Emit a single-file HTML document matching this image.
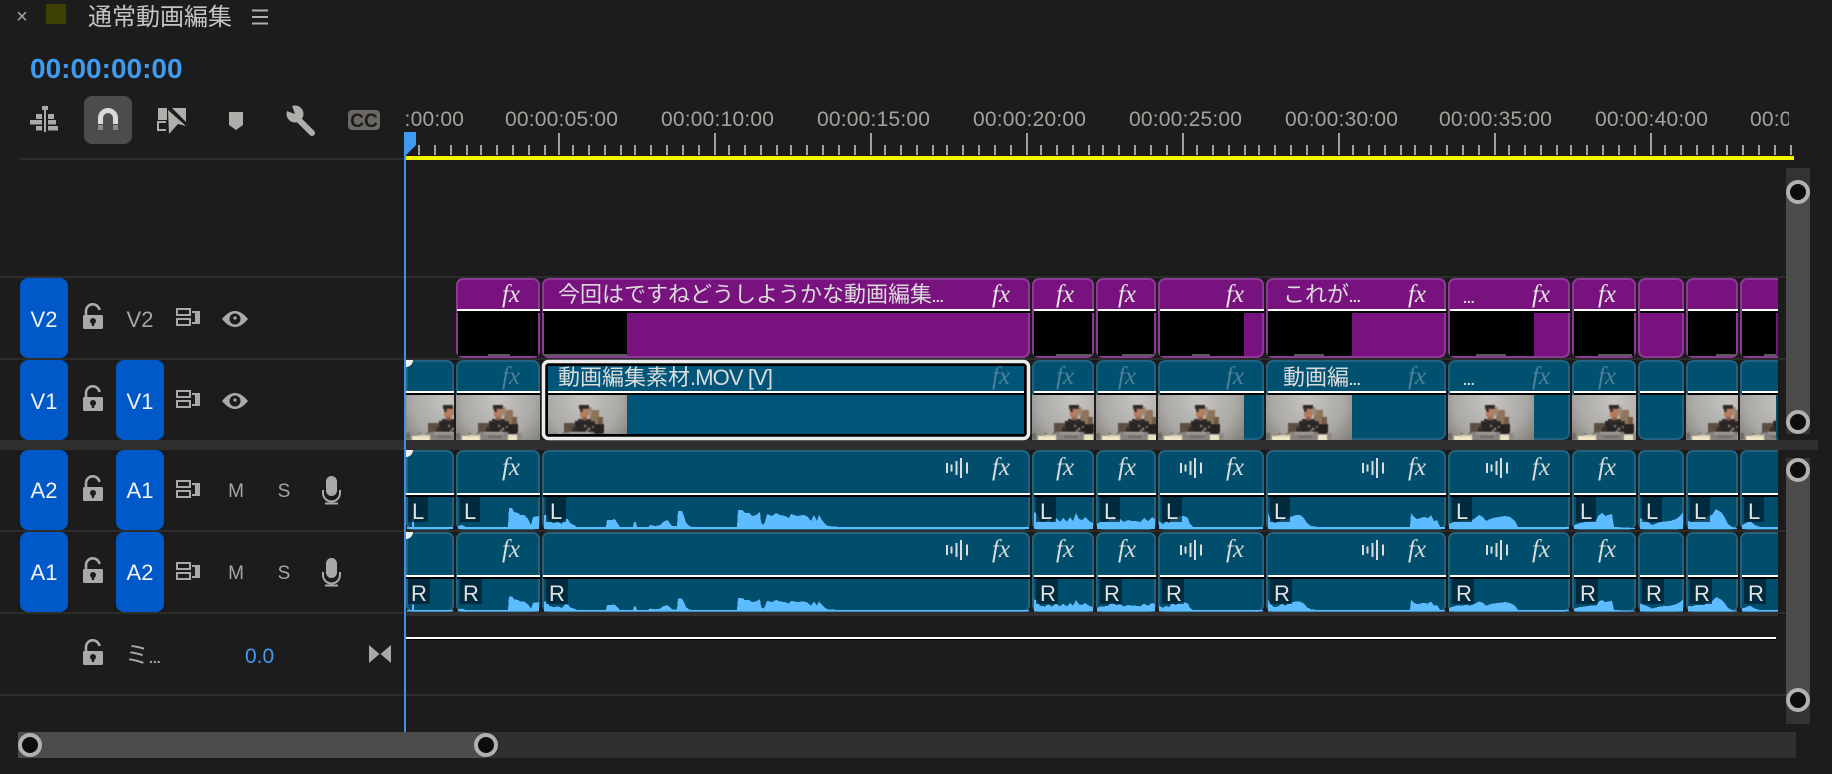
<!DOCTYPE html>
<html lang="ja"><head><meta charset="utf-8"><title>通常動画編集</title>
<style>
html,body{margin:0;padding:0;background:#1c1c1c;width:1832px;height:774px;overflow:hidden}
svg{display:block}
text{font-family:"Liberation Sans","Noto Sans CJK JP",sans-serif}
.fx text{font-family:"Liberation Serif",serif;font-style:italic;font-size:25px;text-anchor:end}
.rl text{font-size:21px;fill:#a5a19c;letter-spacing:.2px}
.btn{font-size:22px;fill:#f2f2f2;text-anchor:middle}
.clipt{font-size:22px;fill:#dcdcdc}
.dots{font-size:14px;font-weight:700}
.lat{letter-spacing:-.9px}
.lr{font-size:22px;fill:#e2e2e2}
.ms{font-size:19px;fill:#a6a6a6;text-anchor:middle}
</style></head><body>
<svg width="1832" height="774" viewBox="0 0 1832 774" xmlns="http://www.w3.org/2000/svg">
<defs>
<radialGradient id="bg" gradientUnits="userSpaceOnUse" cx="42" cy="6" r="60"><stop offset="0" stop-color="#c6c4c1"/><stop offset=".6" stop-color="#aba9a5"/><stop offset="1" stop-color="#7c7974"/></radialGradient>
<filter id="sf" x="-5%" y="-5%" width="110%" height="110%"><feGaussianBlur stdDeviation=".55"/></filter>
<symbol id="t" overflow="hidden">
<rect width="86" height="45" fill="url(#bg)"/>
<g filter="url(#sf)">
<rect x="48" y="15" width="9" height="14" fill="#8d7459"/><rect x="45" y="12" width="5" height="8" fill="#9a8b78"/><rect x="56" y="22" width="5" height="14" fill="#6f5c48"/>
<rect x="22" y="28" width="12" height="10" fill="#5b5042"/>
<rect x="33" y="26" width="20" height="13" fill="#2a2826"/><rect x="36" y="24" width="13" height="4" fill="#2f2c2a"/><rect x="50" y="29" width="12" height="10" fill="#262422"/><rect x="30" y="32" width="5" height="7" fill="#302d2b"/>
<rect x="37" y="10" width="10" height="4" fill="#2f2c2a"/><rect x="38" y="14" width="8" height="8" fill="#b57c5f"/><rect x="40" y="22" width="5" height="3" fill="#8f6048"/><rect x="38" y="13" width="3" height="4" fill="#3a302a"/>
<rect x="42" y="30" width="2" height="2" fill="#77736f"/><rect x="46" y="33" width="2" height="2" fill="#8a8682"/><rect x="50" y="31" width="2" height="2" fill="#6a6662"/><rect x="44" y="35" width="2" height="2" fill="#77736f"/>
<rect x="0" y="38" width="4" height="6" fill="#6e6a65"/><rect x="12" y="38" width="3" height="3" fill="#7b7671"/><rect x="20" y="38" width="3" height="3" fill="#7b7671"/>
<rect x="6" y="41" width="20" height="5" fill="#efe6c6"/><rect x="12" y="40" width="12" height="2" fill="#d9d0b2"/>
<rect x="24" y="37" width="28" height="9" fill="#86827d"/><rect x="28" y="37" width="20" height="2" fill="#a19d98"/><rect x="32" y="41" width="14" height="2" fill="#6f6b66"/>
<rect x="52" y="40" width="9" height="6" fill="#ebe2c3"/><rect x="61" y="38" width="5" height="8" fill="#8d8984"/>
</g>
</symbol>
<g id="cs">
<rect x="407" y="1" width="46" height="78" rx="6"/><rect x="457" y="1" width="82" height="78" rx="6"/><rect x="543" y="1" width="486" height="78" rx="6"/><rect x="1033" y="1" width="60" height="78" rx="6"/><rect x="1097" y="1" width="58" height="78" rx="6"/><rect x="1159" y="1" width="104" height="78" rx="6"/><rect x="1267" y="1" width="178" height="78" rx="6"/><rect x="1449" y="1" width="120" height="78" rx="6"/><rect x="1573" y="1" width="62" height="78" rx="6"/><rect x="1639" y="1" width="44" height="78" rx="6"/><rect x="1687" y="1" width="50" height="78" rx="6"/><rect x="1741" y="1" width="60" height="78" rx="6"/>
</g>
<g id="ln">
<rect x="406" width="48" height="2"/><rect x="457" width="83" height="2"/><rect x="543" width="487" height="2"/><rect x="1034" width="60" height="2"/><rect x="1098" width="58" height="2"/><rect x="1160" width="104" height="2"/><rect x="1268" width="178" height="2"/><rect x="1450" width="120" height="2"/><rect x="1574" width="62" height="2"/><rect x="1640" width="44" height="2"/><rect x="1688" width="50" height="2"/><rect x="1742" width="40" height="2"/>
</g>
<g id="tk"><path d="M14 145V155M30 145V155M46 145V155M62 145V155M76 145V155M92 145V155M108 145V155M124 145V155M140 145V155M156 133V155" stroke="#a39f9a" stroke-width="2" fill="none"/></g>
<g id="lock" fill="#a9a9a9"><rect x="83" y="315" width="20" height="14" rx="1.500"/><path d="M86 316v-4.500a6.800 6.800 0 0 1 13.500-1.500" fill="none" stroke="#a9a9a9" stroke-width="2.600"/><circle cx="93" cy="321" r="3" fill="#1c1c1c"/><rect x="91.800" y="321" width="2.400" height="5" fill="#1c1c1c"/></g>
<g id="sync" fill="none" stroke="#a9a9a9" stroke-width="2"><rect x="177" y="309" width="13" height="6"/><rect x="177" y="319" width="13" height="6"/><path d="M192 312h7v11h-7" stroke-width="2"/><rect x="195" y="312" width="4" height="11" fill="#a9a9a9" stroke="none"/></g>
<g id="eye"><path d="M222 319Q235 303 248 319Q235 335 222 319Z" fill="#a9a9a9"/><circle cx="235" cy="319" r="5.500" fill="#1c1c1c"/><circle cx="235" cy="318" r="1.600" fill="#a9a9a9"/></g>
<g id="mic"><rect x="326" y="476" width="11" height="20" rx="5.500" fill="#a9a9a9"/><path d="M323 490v3a8.500 8.500 0 0 0 17 0v-3M331.500 501v2M325 503.500h13" fill="none" stroke="#a9a9a9" stroke-width="2"/></g>
<g id="aw"><path d="M1-5v10M5.500-3.500v7M10.500-7v14M15-10v20M21-5.500v11" stroke="#dcdcdc" stroke-width="2" fill="none"/></g>
<g id="wave" fill="#5cbcff" shape-rendering="crispEdges">
<polygon points="407,529 407,527 412,527 412,519 414,519 414,527 453,527 453,529"/>
<polygon points="458,529 458,526 462,525 466,527 508,527 509,508 512,508 514,512 518,513 520,515 524,515 528,519 531,525 533,517 539,516 539,529"/>
<polygon points="544,529 544,515 547,515 549,521 553,523 558,522 562,524 565,519 568,519 570,523 574,525 577,527 606,527 607,520 612,520 614,519 616,521 618,524 620,527 633,527 634,522 636,522 637,527 648,527 650,525 655,526 660,525 663,522 667,520 669,522 672,526 677,526 678,511 682,511 684,516 686,523 689,526 692,527 737,527 738,510 742,510 745,513 749,513 752,516 756,515 760,512 761,522 763,525 765,522 767,514 772,516 776,513 780,515 785,516 789,518 791,514 797,516 803,515 807,516 811,521 814,515 817,521 819,515 822,520 825,524 828,526 840,527 1029,527 1029,529"/>
<polygon points="1034,529 1034,512 1037,514 1040,521 1045,522 1048,519 1052,522 1056,518 1060,522 1063,518 1067,522 1070,517 1073,521 1076,513 1079,519 1082,520 1085,517 1089,521 1093,523 1093,529"/>
<polygon points="1097,529 1097,524 1100,522 1104,522 1108,521 1110,518 1113,516 1116,520 1120,519 1124,522 1128,520 1132,521 1136,521 1140,522 1144,518 1148,521 1152,517 1155,519 1155,529"/>
<polygon points="1159,529 1159,521 1163,524 1166,521 1169,523 1172,517 1176,520 1179,516 1184,516 1188,518 1190,524 1193,527 1263,527 1263,529"/>
<polygon points="1268,529 1268,512 1270,518 1274,523 1278,522 1282,518 1285,521 1290,517 1296,515 1300,515 1304,518 1307,523 1311,526 1318,527 1410,527 1411,513 1414,517 1417,519 1424,517 1428,518 1431,515 1434,521 1437,520 1438,522 1440,527 1445,527 1445,529"/>
<polygon points="1449,529 1449,524 1456,521 1468,520 1470,521 1474,519 1479,515 1483,517 1486,521 1490,519 1493,518 1505,516 1510,517 1515,521 1518,527 1569,527 1569,529"/>
<polygon points="1574,529 1574,525 1580,523 1590,521 1596,521 1598,516 1602,513 1605,516 1612,514 1614,527 1635,528 1635,529"/>
<polygon points="1640,529 1640,518 1648,522 1652,525 1660,522 1670,521 1676,519 1680,516 1683,512 1683,529"/>
<polygon points="1688,529 1688,521 1692,522 1696,520 1704,520 1708,516 1712,515 1716,509 1719,511 1722,513 1725,518 1728,524 1732,527 1737,528 1737,529"/>
<polygon points="1742,529 1742,525 1746,523 1750,521 1755,525 1760,527 1778,527 1778,529"/>
</g>
</defs>

<rect width="1832" height="774" fill="#1c1c1c"/>

<!-- header -->
<text x="22" y="23" font-size="20" fill="#a8a8a8" text-anchor="middle">×</text>
<rect x="46" y="4" width="20" height="20" fill="#3c4000"/>
<text x="88" y="25" font-size="24" fill="#c4c4c4">通常動画編集</text>
<path d="M252 10.500H268M252 17H268M252 23.500H268" stroke="#b0b0b0" stroke-width="2"/>
<text x="30" y="78" font-size="28" font-weight="700" fill="#3f9bf0">00:00:00:00</text>

<!-- toolbar -->
<g fill="#a9a9a9">
<path d="M44 110h2v22h-2zM42 106h6v4h-6zM36 114h6v5h-6zM48 114h6v5h-6zM30 120h12v4.500H30zM48 120h8v4.500h-8zM36 126h6v4.500h-6zM48 126h10v4.500H48z"/>
</g>
<rect x="84" y="96" width="48" height="48" rx="8" fill="#4c4c4c"/>
<path d="M100.500 124V118a7.500 7.500 0 0 1 15 0V124" fill="none" stroke="#dcd8dc" stroke-width="5"/>
<path d="M100.500 125v5M115.500 125v5" stroke="#8f8a84" stroke-width="5" fill="none"/>
<g fill="#b0aeab">
<rect x="158" y="108" width="9" height="12"/>
<path d="M166 122h-8v8h8" fill="none" stroke="#b0aeab" stroke-width="2"/>
<path d="M168 110L186 126L178 124L169 134Z"/>
<path d="M172 108H186V122Z"/>
<path d="M229 112H243V125L236 130L229 125Z"/>
<path d="M312 133L297 118" stroke="#b0aeab" stroke-width="6" stroke-linecap="round"/>
<circle cx="295" cy="114" r="8.500"/>
</g>
<polygon points="295,114 291,103 284,110" fill="#1c1c1c"/>
<rect x="348" y="110" width="32" height="20" rx="4" fill="#6b6864"/>
<text x="364" y="127" font-size="19" font-weight="700" fill="#1c1c1c" text-anchor="middle">CC</text>

<!-- ruler -->
<svg x="404" y="0" width="1385" height="132" viewBox="404 0 1385 132"><g class="rl">
<text x="351" y="126">00:00:00:00</text><text x="505" y="126">00:00:05:00</text><text x="661" y="126">00:00:10:00</text><text x="817" y="126">00:00:15:00</text><text x="973" y="126">00:00:20:00</text><text x="1129" y="126">00:00:25:00</text><text x="1285" y="126">00:00:30:00</text><text x="1439" y="126">00:00:35:00</text><text x="1595" y="126">00:00:40:00</text><text x="1750" y="126">00:00:45:00</text>
</g></svg>
<svg x="404" y="130" width="1391" height="30" viewBox="404 130 1391 30">
<path d="M419 145V155M435 145V155M451 145V155M467 145V155M481 145V155M497 145V155M513 145V155M529 145V155M545 145V155M559 133V155" stroke="#a39f9a" stroke-width="2" fill="none"/>
<use href="#tk" x="559"/><use href="#tk" x="715"/><use href="#tk" x="871"/><use href="#tk" x="1027"/><use href="#tk" x="1183"/><use href="#tk" x="1339"/><use href="#tk" x="1495"/><use href="#tk" x="1651"/>
</svg>
<rect x="405" y="156" width="1389" height="4" fill="#f5f500"/>

<!-- separators -->
<rect x="20" y="158" width="384" height="2" fill="#2d2d2d"/>
<rect x="0" y="276" width="1786" height="2" fill="#2d2d2d"/>
<rect x="0" y="358" width="1786" height="2" fill="#2d2d2d"/>
<rect x="0" y="440" width="1818" height="10" fill="#2f2f2f"/>
<rect x="0" y="530" width="1786" height="2" fill="#2d2d2d"/>
<rect x="0" y="612" width="1786" height="2" fill="#2d2d2d"/>
<rect x="406" y="612" width="1372" height="4" fill="#2f2f2f"/>
<rect x="0" y="694" width="1786" height="2" fill="#2d2d2d"/>

<!-- track headers -->
<g fill="#0059c8">
<rect x="20" y="278" width="48" height="80" rx="8"/><rect x="20" y="360" width="48" height="80" rx="8"/><rect x="20" y="450" width="48" height="80" rx="8"/><rect x="20" y="532" width="48" height="80" rx="8"/>
<rect x="116" y="360" width="48" height="80" rx="8"/><rect x="116" y="450" width="48" height="80" rx="8"/><rect x="116" y="532" width="48" height="80" rx="8"/>
</g>
<text class="btn" x="44" y="327">V2</text><text class="btn" x="44" y="409">V1</text><text class="btn" x="44" y="498">A2</text><text class="btn" x="44" y="580">A1</text>
<text class="btn" x="140" y="327" style="fill:#a6a6a6">V2</text><text class="btn" x="140" y="409">V1</text><text class="btn" x="140" y="498">A1</text><text class="btn" x="140" y="580">A2</text>
<use href="#lock"/><use href="#lock" y="82"/><use href="#lock" y="172"/><use href="#lock" y="254"/><use href="#lock" y="336"/>
<use href="#sync"/><use href="#sync" y="82"/><use href="#sync" y="172"/><use href="#sync" y="254"/>
<use href="#eye"/><use href="#eye" y="82"/>
<text class="ms" x="236" y="497">M</text><text class="ms" x="284" y="497">S</text>
<text class="ms" x="236" y="579">M</text><text class="ms" x="284" y="579">S</text>
<use href="#mic"/><use href="#mic" y="82"/>
<text x="125" y="663" font-size="24" fill="#a9a9a9">ミ<tspan class="dots" font-size="14" font-weight="700">...</tspan></text>
<text x="245" y="663" font-size="21" fill="#3f9bf0">0.0</text>
<path d="M369 645L379.500 654L369 663ZM391 645L380.500 654L391 663Z" fill="#a9a9a9"/>

<!-- clips area -->
<svg x="0" y="0" width="1778" height="774" viewBox="0 0 1778 774">
<!-- V2 -->
<use href="#cs" y="278" fill="#78127f" stroke="#8d3a94" stroke-width="2"/>
<use href="#ln" y="309" fill="#fff"/><use href="#ln" y="311" fill="#000"/>
<rect x="405" y="278" width="51" height="80" fill="#1c1c1c"/>
<g fill="#000">
<rect x="458" y="313" width="80" height="43"/><rect x="544" y="313" width="83" height="43"/><rect x="1034" y="313" width="58" height="43"/><rect x="1098" y="313" width="56" height="43"/><rect x="1160" y="313" width="84" height="43"/><rect x="1268" y="313" width="84" height="43"/><rect x="1450" y="313" width="84" height="43"/><rect x="1574" y="313" width="60" height="43"/><rect x="1688" y="313" width="48" height="43"/><rect x="1742" y="313" width="34" height="43"/>
</g>
<g fill="#5a5a5a">
<rect x="488" y="354" width="22" height="2"/><rect x="544" y="354" width="83" height="2"/><rect x="1056" y="354" width="36" height="2"/><rect x="1122" y="354" width="32" height="2"/><rect x="1192" y="354" width="18" height="2"/><rect x="1294" y="354" width="30" height="2"/><rect x="1476" y="354" width="30" height="2"/><rect x="1598" y="354" width="34" height="2"/><rect x="1716" y="354" width="20" height="2"/><rect x="1764" y="354" width="12" height="2"/>
</g>
<text class="clipt" x="558" y="302">今回はですねどうしようかな動画編集<tspan class="dots">...</tspan></text>
<text class="clipt" x="1283" y="302">これが<tspan class="dots">...</tspan></text>
<text class="clipt dots" x="1463" y="303">...</text>
<g class="fx" fill="#e6e6e6" transform="translate(0,302)"><text x="520">fx</text><text x="1010">fx</text><text x="1074">fx</text><text x="1136">fx</text><text x="1244">fx</text><text x="1426">fx</text><text x="1550">fx</text><text x="1616">fx</text></g>

<!-- V1 -->
<use href="#cs" y="360" fill="#00506f" stroke="#20627f" stroke-width="2"/>
<use href="#ln" y="391" fill="#fff"/><use href="#ln" y="393" fill="#000"/>
<use href="#t" x="406" y="395" width="48" height="45"/>
<use href="#t" x="456" y="395" width="84" height="45"/>
<use href="#t" x="1032" y="395" width="62" height="45"/>
<use href="#t" x="1096" y="395" width="60" height="45"/>
<use href="#t" x="1158" y="395" width="86" height="45"/>
<use href="#t" x="1266" y="395" width="86" height="45"/>
<use href="#t" x="1448" y="395" width="86" height="45"/>
<use href="#t" x="1572" y="395" width="64" height="45"/>
<use href="#t" x="1686" y="395" width="52" height="45"/>
<use href="#t" x="1740" y="395" width="36" height="45"/>
<rect x="543.500" y="361.500" width="485" height="77" rx="5" fill="#000" stroke="#ececec" stroke-width="3.500"/>
<rect x="548" y="366" width="476" height="25" fill="#005579"/>
<rect x="548" y="391" width="476" height="2" fill="#fff"/>
<rect x="548" y="395" width="476" height="39" fill="#005579"/>
<svg x="548" y="395" width="79" height="39" viewBox="6 0 79 39"><use href="#t" width="86" height="45"/></svg>
<text class="clipt" x="558" y="385">動画編集素材<tspan class="lat">.MOV [V]</tspan></text>
<text class="clipt" x="1283" y="385">動画編<tspan class="dots">...</tspan></text>
<text class="clipt dots" x="1463" y="385">...</text>
<g class="fx" fill="#4f8098" transform="translate(0,384)"><text x="520">fx</text><text x="1010">fx</text><text x="1074">fx</text><text x="1136">fx</text><text x="1244">fx</text><text x="1426">fx</text><text x="1550">fx</text><text x="1616">fx</text></g>

<!-- A1 row -->
<use href="#cs" y="450" fill="#004e6c" stroke="#24627f" stroke-width="2"/>
<use href="#ln" y="493" fill="#fff"/><use href="#ln" y="495" fill="#000"/>
<use href="#wave"/>
<g fill="#001e2c" fill-opacity=".72">
<rect x="408" y="497" width="20" height="25"/><rect x="460" y="497" width="20" height="25"/><rect x="546" y="497" width="20" height="25"/><rect x="1036" y="497" width="20" height="25"/><rect x="1100" y="497" width="20" height="25"/><rect x="1162" y="497" width="20" height="25"/><rect x="1270" y="497" width="20" height="25"/><rect x="1452" y="497" width="20" height="25"/><rect x="1576" y="497" width="20" height="25"/><rect x="1642" y="497" width="20" height="25"/><rect x="1690" y="497" width="20" height="25"/><rect x="1744" y="497" width="20" height="25"/>
</g>
<g class="lr" transform="translate(0,519)"><text x="412">L</text><text x="464">L</text><text x="550">L</text><text x="1040">L</text><text x="1104">L</text><text x="1166">L</text><text x="1274">L</text><text x="1456">L</text><text x="1580">L</text><text x="1646">L</text><text x="1694">L</text><text x="1748">L</text></g>
<use href="#aw" x="946" y="468"/><use href="#aw" x="1180" y="468"/><use href="#aw" x="1362" y="468"/><use href="#aw" x="1486" y="468"/>
<g class="fx" fill="#dcdcdc" transform="translate(0,475)"><text x="520">fx</text><text x="1010">fx</text><text x="1074">fx</text><text x="1136">fx</text><text x="1244">fx</text><text x="1426">fx</text><text x="1550">fx</text><text x="1616">fx</text></g>

<!-- A2 row -->
<use href="#cs" y="532" fill="#004e6c" stroke="#24627f" stroke-width="2"/>
<use href="#ln" y="575" fill="#fff"/><use href="#ln" y="577" fill="#000"/>
<use href="#wave" transform="matrix(1 0 0 .72 0 230.620)"/>
<g fill="#001e2c" fill-opacity=".72">
<rect x="408" y="579" width="22" height="25"/><rect x="460" y="579" width="22" height="25"/><rect x="546" y="579" width="22" height="25"/><rect x="1036" y="579" width="22" height="25"/><rect x="1100" y="579" width="22" height="25"/><rect x="1162" y="579" width="22" height="25"/><rect x="1270" y="579" width="22" height="25"/><rect x="1452" y="579" width="22" height="25"/><rect x="1576" y="579" width="22" height="25"/><rect x="1642" y="579" width="22" height="25"/><rect x="1690" y="579" width="22" height="25"/><rect x="1744" y="579" width="22" height="25"/>
</g>
<g class="lr" transform="translate(0,601)"><text x="411">R</text><text x="463">R</text><text x="549">R</text><text x="1040">R</text><text x="1104">R</text><text x="1166">R</text><text x="1274">R</text><text x="1456">R</text><text x="1580">R</text><text x="1646">R</text><text x="1694">R</text><text x="1748">R</text></g>
<use href="#aw" x="946" y="550"/><use href="#aw" x="1180" y="550"/><use href="#aw" x="1362" y="550"/><use href="#aw" x="1486" y="550"/>
<g class="fx" fill="#dcdcdc" transform="translate(0,557)"><text x="520">fx</text><text x="1010">fx</text><text x="1074">fx</text><text x="1136">fx</text><text x="1244">fx</text><text x="1426">fx</text><text x="1550">fx</text><text x="1616">fx</text></g>

<!-- white corner marks -->
<path d="M406 360H413A7 7 0 0 1 406 367Z" fill="#f0f0f0"/>
<path d="M406 450H413A7 7 0 0 1 406 457Z" fill="#f0f0f0"/>
<path d="M406 532H413A7 7 0 0 1 406 539Z" fill="#f0f0f0"/>
</svg>

<!-- master line -->
<rect x="406" y="637" width="1370" height="2" fill="#fff"/>
<rect x="406" y="639" width="1370" height="1" fill="#000"/>

<!-- playhead -->
<rect x="404" y="150" width="2" height="582" fill="#3f8fe8"/>
<polygon points="404,132 416,132 416,145 405,156 404,156" fill="#3f9bf0"/>

<!-- right scrollbars -->
<rect x="1786" y="168" width="24" height="266" fill="#333"/>
<rect x="1786" y="192" width="24" height="230" fill="#4c4c4c"/>
<rect x="1786" y="458" width="24" height="266" fill="#333"/>
<rect x="1786" y="470" width="24" height="230" fill="#4c4c4c"/>
<g fill="#0d0d0d" stroke="#b3b1ad" stroke-width="4">
<circle cx="1798" cy="192" r="10"/><circle cx="1798" cy="422" r="10"/><circle cx="1798" cy="470" r="10"/><circle cx="1798" cy="700" r="10"/>
</g>
<!-- bottom scrollbar -->
<rect x="18" y="732" width="1778" height="26" fill="#303030"/>
<rect x="18" y="732" width="468" height="26" fill="#4c4c4c"/>
<g fill="#0d0d0d" stroke="#b3b1ad" stroke-width="4"><circle cx="30" cy="745" r="10"/><circle cx="486" cy="745" r="10"/></g>
</svg>
</body></html>
